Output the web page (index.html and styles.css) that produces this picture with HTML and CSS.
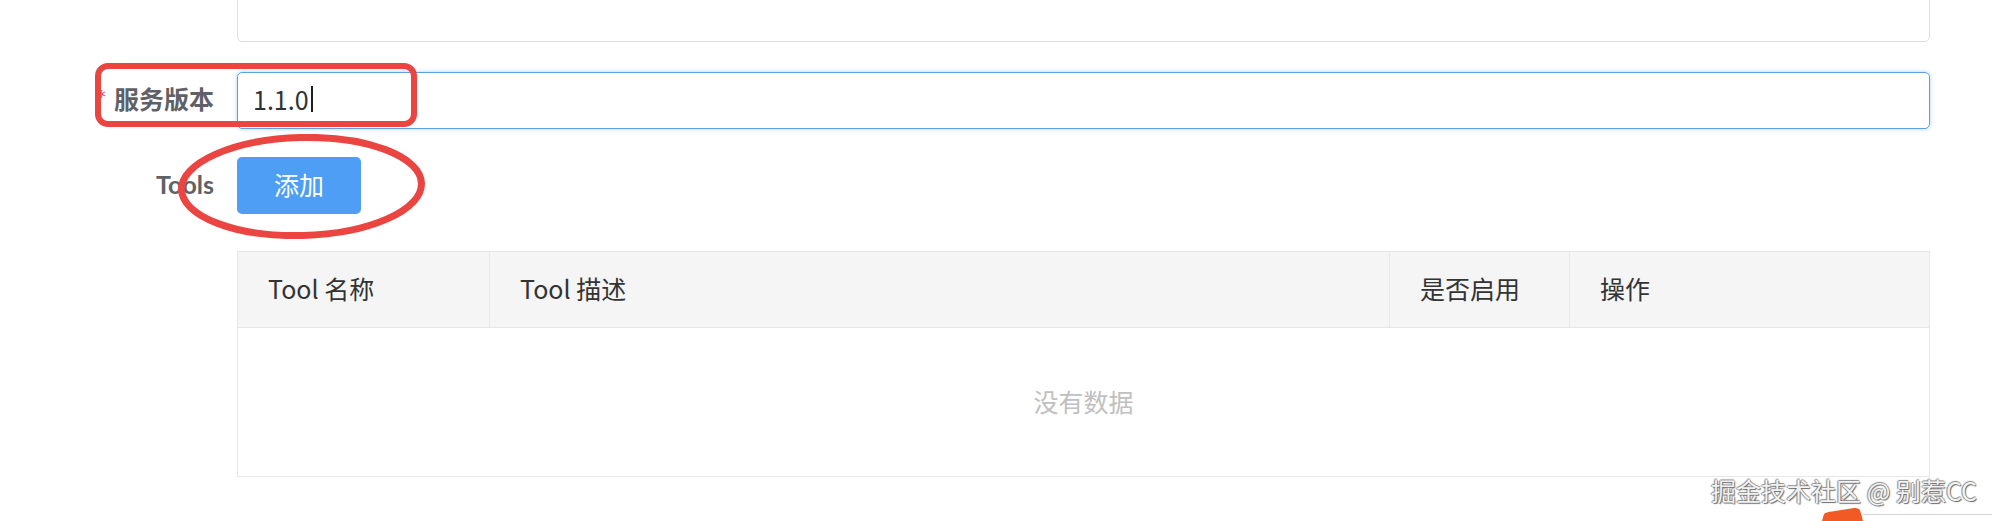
FILE: index.html
```html
<!DOCTYPE html>
<html lang="zh-CN">
<head>
<meta charset="utf-8">
<title>服务配置</title>
<link rel="stylesheet" href="styles.css">
</head>
<body>
<div class="page">
  <form class="form">
    <div class="form-item">
      <div class="label"></div>
      <div class="textarea"></div>
    </div>

    <div class="form-item row-version">
      <label class="label required">服务版本</label>
      <div class="input is-focus"><span class="value">1.1.0</span><span class="caret"></span></div>
    </div>

    <div class="form-item row-tools">
      <label class="label">Tools</label>
      <div class="content">
        <button type="button" class="btn-primary">添加</button>
      </div>
    </div>

    <div class="form-item row-table">
      <div class="label"></div>
      <div class="table">
        <div class="thead">
          <div class="th">Tool 名称</div>
          <div class="th">Tool 描述</div>
          <div class="th">是否启用</div>
          <div class="th">操作</div>
        </div>
        <div class="tbody-empty">没有数据</div>
      </div>
    </div>
  </form>

  <svg class="mark-rect" width="322" height="64" viewBox="0 0 322 64">
    <rect x="3" y="3" width="316" height="58" rx="10" ry="10" fill="none" stroke="#ea4540" stroke-width="6"/>
  </svg>
  <svg class="mark-ellipse" width="247" height="105" viewBox="0 0 247 105">
    <ellipse cx="123.5" cy="52.5" rx="120" ry="49" fill="none" stroke="#ea4540" stroke-width="7" transform="rotate(-1.5 123.5 52.5)"/>
  </svg>

  <div class="watermark">掘金技术社区 @ 别惹CC</div>
  <svg class="corner-shape" width="46" height="15" viewBox="0 0 46 15">
    <path d="M2 15 L4 8 Q6 6 12 5.5 L34 2 Q38 1.5 40 4 L43 15 Z" fill="#f15a24"/>
  </svg>
  <div class="corner-line"></div>
</div>
</body>
</html>
```

FILE: styles.css
```css
html, body {
  margin: 0;
  padding: 0;
  background: #ffffff;
}

body {
  font-family: "Noto Sans CJK SC", "Liberation Sans", sans-serif;
  font-size: 25px;
  line-height: 30px;
  color: #333333;
  overflow: hidden;
}

.page {
  position: relative;
  display: flow-root;
  width: 1992px;
  height: 521px;
}

.form {
  display: flex;
  flex-direction: column;
  margin-top: -18px;
}

.form-item {
  display: flex;
  align-items: center;
}

.label {
  width: 214px;
  flex: 0 0 214px;
  margin-right: 23px;
  padding-bottom: 4px;
  text-align: right;
  font-family: "Lato", "Noto Sans CJK SC", sans-serif;
  font-weight: bold;
  color: #5f6166;
  font-size: 25px;
  line-height: 30px;
  white-space: nowrap;
}

.label.required::before {
  content: "*";
  color: #e0605a;
  margin-right: 7px;
  font-weight: normal;
}

.textarea {
  width: 1693px;
  height: 60px;
  box-sizing: border-box;
  border: 1px solid #dcdfe6;
  border-radius: 5px;
  background: #fff;
}

.row-version {
  margin-top: 30px;
}

.input {
  width: 1693px;
  height: 57px;
  box-sizing: border-box;
  border: 1px solid #5c9fe3;
  border-radius: 5px;
  padding: 0 15px 3px;
  display: flex;
  align-items: center;
  color: #303133;
  font-size: 25px;
  box-shadow: 0 0 4px rgba(64, 158, 255, 0.45);
}

.caret {
  display: inline-block;
  width: 2px;
  height: 26px;
  background: #1f1f1f;
  margin-left: 2px;
}

.row-tools {
  margin-top: 28px;
}

.btn-primary {
  width: 124px;
  height: 57px;
  border: none;
  border-radius: 5px;
  background: #4d9ef4;
  color: #ffffff;
  font-family: "Noto Sans CJK SC", "Liberation Sans", sans-serif;
  font-size: 25px;
  padding: 0 0 4px;
  display: block;
}

.row-table {
  margin-top: 37px;
}

.table {
  width: 1693px;
  box-sizing: border-box;
  border: 1px solid #e8e8e8;
}

.thead {
  display: grid;
  grid-template-columns: 252px 900px 180px 1fr;
  height: 76px;
  box-sizing: border-box;
  background: #f5f5f5;
  border-bottom: 1px solid #e6e6e6;
}

.th {
  display: flex;
  align-items: center;
  padding: 0 0 3px 30px;
  color: #333333;
  font-size: 25px;
  border-right: 1px solid #e8e8e8;
  white-space: nowrap;
}

.th:last-child {
  border-right: none;
}

.tbody-empty {
  height: 148px;
  display: flex;
  align-items: center;
  justify-content: center;
  padding-bottom: 2px;
  box-sizing: border-box;
  color: #c0c0c0;
  font-size: 25px;
}

.mark-rect {
  position: absolute;
  left: 95px;
  top: 63px;
}

.mark-ellipse {
  position: absolute;
  left: 178px;
  top: 134px;
}

.watermark {
  position: absolute;
  right: 15px;
  top: 475px;
  font-size: 25px;
  line-height: 30px;
  color: #f2f2f2;
  font-family: "Noto Sans CJK SC", "Liberation Sans", sans-serif;
  text-shadow: 1px 1px 1px #6a6a6a, -1px 0 1px #8a8a8a, 0 -1px 1px #8a8a8a;
  white-space: nowrap;
}

.corner-shape {
  position: absolute;
  left: 1820px;
  top: 506px;
}

.corner-line {
  position: absolute;
  left: 1863px;
  top: 514px;
  width: 129px;
  height: 1px;
  background: #d4d4d4;
}
```
